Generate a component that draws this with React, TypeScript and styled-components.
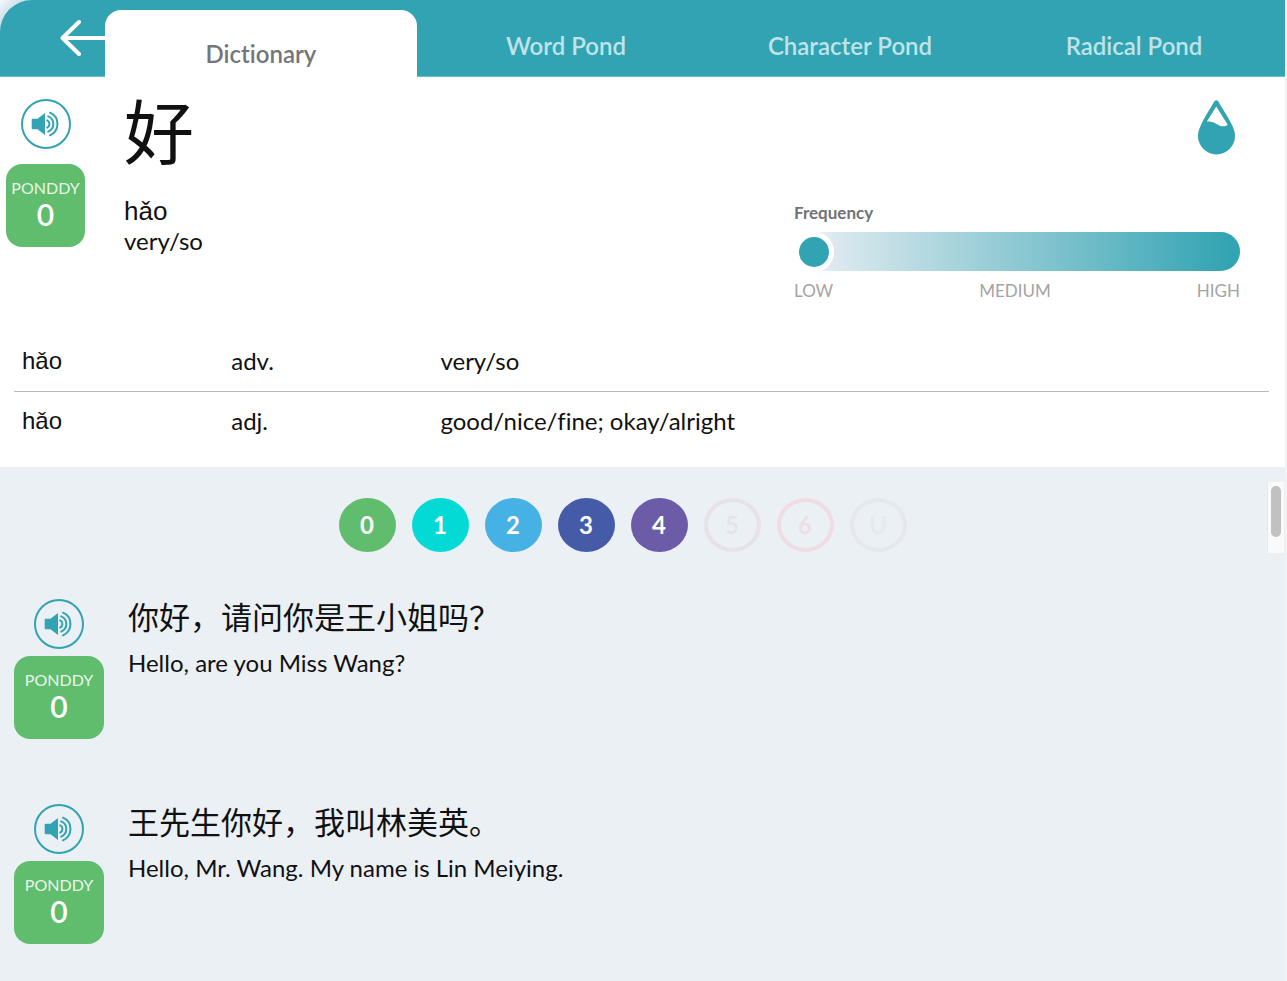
import React from "react";
import styled, { createGlobalStyle } from "styled-components";

const TEAL = "#32a3b2";
const GREEN = "#5fbd6d";
const HAN = '"Noto Sans CJK SC", sans-serif';

const GlobalStyle = createGlobalStyle`
  *, *::before, *::after { box-sizing: border-box; }
  body {
    margin: 0;
    background: #fff;
    color: #111;
    font-family: "Lato", "Open Sans", sans-serif;
    font-size: 24px;
    line-height: 32px;
    font-variant-ligatures: none;
  }
  button { font: inherit; border: 0; padding: 0; background: none; cursor: pointer; }
  h1, p { margin: 0; font-weight: 400; }
`;

const Page = styled.div`
  display: flex;
  flex-direction: column;
  min-height: 100vh;
`;

const HeaderBack = styled.div`
  background: linear-gradient(135deg, #f4f8fb 0, #cfe0ec 16px, #cfe0ec 40px, #fff 41px);
  padding-right: 2px;
`;

const Header = styled.header`
  display: flex;
  height: 77px;
  border-top-left-radius: 32px;
  background: ${TEAL};
  border-bottom: 1px solid #6cbfca;
`;

const BackButton = styled.button`
  flex: none;
  width: 105px;
  height: 76px;
  display: flex;
  justify-content: flex-end;
`;

const Tabs = styled.nav`
  flex: 1;
  display: flex;
  padding-right: 9px;
`;

const Tab = styled.a<{ $active?: boolean }>`
  flex: ${(p) => (p.$active ? "312 1 0" : "284 1 0")};
  display: flex;
  align-items: center;
  justify-content: center;
  height: ${(p) => (p.$active ? "67px" : "77px")};
  margin: ${(p) => (p.$active ? "10px 7px 0 0" : "0")};
  padding-top: ${(p) => (p.$active ? "20px" : "15px")};
  border-radius: ${(p) => (p.$active ? "16px 16px 0 0" : "0")};
  background: ${(p) => (p.$active ? "#fff" : "transparent")};
  color: ${(p) => (p.$active ? "#757679" : "#bfe3e8")};
  font-weight: 600;
  text-decoration: none;
`;

const Main = styled.main`
  flex: 1;
  display: flex;
  flex-direction: column;
  border-right: 2px solid #f3f3f4;
`;

const Entry = styled.section`
  display: flex;
  padding: 22px 45px 0 6px;
  min-height: 254px;
`;

const Side = styled.div<{ $wide?: boolean }>`
  flex: none;
  display: flex;
  flex-direction: column;
  align-items: center;
  width: ${(p) => (p.$wide ? "90px" : "79px")};
  gap: ${(p) => (p.$wide ? "7px" : "15px")};
`;

const RoundButton = styled.button`
  display: block;
  width: 50px;
  height: 50px;
  svg { display: block; }
`;

const Badge = styled.div`
  align-self: stretch;
  height: 83px;
  padding-top: 13px;
  border-radius: 16px;
  background: ${GREEN};
  color: #fff;
  text-align: center;
`;

const BadgeName = styled.div`
  font-size: 16px;
  line-height: 22px;
  color: #eaf7ec;
`;

const BadgeLevel = styled.div`
  font-size: 30px;
  line-height: 30px;
  font-weight: 600;
`;

const Word = styled.div`
  flex: 670 1 0;
  padding-left: 39px;
`;

const Character = styled.h1`
  font-family: ${HAN};
  font-size: 70px;
  line-height: 60px;
  margin-bottom: 36px;
`;

const Pinyin = styled.p`
  font-family: "Liberation Sans", sans-serif;
  font-size: 26px;
`;

const Gloss = styled.p`
  line-height: 28px;
`;

const Aside = styled.div`
  flex: 446 1 0;
  display: flex;
  flex-direction: column;
`;

const DropButton = styled.button`
  align-self: flex-end;
  width: 37px;
  height: 55px;
  margin: 1px 5px 48px 0;
  svg { display: block; }
`;

const FrequencyLabel = styled.label`
  font-size: 17px;
  line-height: 20px;
  font-weight: 700;
  color: #717276;
  margin-bottom: 9px;
`;

const Slider = styled.input`
  appearance: none;
  display: block;
  width: 100%;
  height: 39px;
  margin: 0;
  border-radius: 20px;
  background: linear-gradient(to right, #fff 0, #dce9ef 40px, ${TEAL} 98%);
  &::-webkit-slider-thumb {
    appearance: none;
    width: 40px;
    height: 40px;
    border: 5px solid #fff;
    border-radius: 50%;
    background: ${TEAL};
  }
`;

const Scale = styled.div`
  display: flex;
  justify-content: space-between;
  padding-top: 9px;
  font-size: 17px;
  line-height: 22px;
  color: #a3a4a6;
`;

const Senses = styled.table`
  margin: 0 16px 16px 14px;
  border-collapse: collapse;
  table-layout: fixed;
  td { height: 60px; padding: 0 0 0 8px; }
  tr + tr td { border-top: 1px solid #b9babc; }
`;

const SenseCell = styled.td<{ $w: string; $pinyin?: boolean }>`
  width: ${(p) => p.$w};
  font-family: ${(p) => (p.$pinyin ? '"Liberation Sans", sans-serif' : "inherit")};
`;

const Examples = styled.section`
  position: relative;
  flex: 1;
  padding: 31px 40px 36px 14px;
  background: #ebf0f5;
`;

const Levels = styled.div`
  display: flex;
  justify-content: center;
  gap: 16px;
  padding-right: 14px;
  margin-bottom: 47px;
`;

const Level = styled.button<{ $color: string; $off?: boolean }>`
  width: 57px;
  height: 54px;
  border-radius: 50%;
  border: ${(p) => (p.$off ? `4px solid ${p.$color}` : "0")};
  background: ${(p) => (p.$off ? "transparent" : p.$color)};
  color: ${(p) => (p.$off ? p.$color : "#fff")};
  font-weight: ${(p) => (p.$off ? 600 : 700)};
`;

const ScrollTrack = styled.div`
  position: absolute;
  top: 15px;
  right: 1px;
  width: 17px;
  height: 71px;
  padding: 4px 3px 0 3px;
  background: #fafafa;
  border-left: 1px solid #e6e9ec;
`;

const ScrollThumb = styled.div`
  width: 10px;
  height: 51px;
  border-radius: 5px;
  background: #c1c1c1;
`;

const Example = styled.article`
  display: flex;
  & + & { margin-top: 65px; }
`;

const ExampleText = styled.div`
  padding-left: 24px;
`;

const Sentence = styled.p`
  font-family: ${HAN};
  font-size: 31px;
  line-height: 34px;
  margin-bottom: 14px;
`;

const SpeakerButton = () => (
  <RoundButton aria-label="Play audio">
    <svg width="50" height="50" viewBox="0 0 50 50" fill="none" stroke={TEAL} strokeWidth="2">
      <circle cx="25" cy="25" r="24" />
      <path d="M11.500 19.800h5L24 14v22l-7.500-5.800h-5a.8.8 0 0 1-.8-.8v-8.800a.8.8 0 0 1 .8-.8z" fill={TEAL} stroke="none" />
      <path d="M26.200 21.400a4 4 0 0 1 0 7.200M27.200 17.400a8.200 8.200 0 0 1 0 15.200M29 13.700a12.300 12.300 0 0 1 0 22.600" strokeLinecap="round" />
    </svg>
  </RoundButton>
);

const PonddyBadge = ({ level }: { level: number }) => (
  <Badge>
    <BadgeName>PONDDY</BadgeName>
    <BadgeLevel>{level}</BadgeLevel>
  </Badge>
);

const tabs = ["Dictionary", "Word Pond", "Character Pond", "Radical Pond"];

const senses = [
  { pinyin: "hǎo", part: "adv.", meaning: "very/so" },
  { pinyin: "hǎo", part: "adj.", meaning: "good/nice/fine; okay/alright" },
];

const levels = [
  { name: "0", color: GREEN },
  { name: "1", color: "#03dad6" },
  { name: "2", color: "#45b1e4" },
  { name: "3", color: "#465ba8" },
  { name: "4", color: "#6c5ba6" },
  { name: "5", color: "#e7e2e9", off: true },
  { name: "6", color: "#efdde3", off: true },
  { name: "U", color: "#e5e8ed", off: true },
];

const examples = [
  { zh: "你好，请问你是王小姐吗？", en: "Hello, are you Miss Wang?" },
  { zh: "王先生你好，我叫林美英。", en: "Hello, Mr. Wang. My name is Lin Meiying." },
];

export default function App() {
  return (
    <Page>
      <GlobalStyle />
      <HeaderBack>
        <Header>
          <BackButton aria-label="Back">
            <svg width="45" height="76" viewBox="0 0 45 76" fill="none" stroke="#fff" strokeWidth="4" strokeLinecap="round" strokeLinejoin="round">
              <path d="M48 38H3M19 22L2.500 38L19 54" />
            </svg>
          </BackButton>
          <Tabs>
            {tabs.map((t, i) => (
              <Tab key={t} href="#" $active={i === 0}>{t}</Tab>
            ))}
          </Tabs>
        </Header>
      </HeaderBack>
      <Main>
        <Entry>
          <Side>
            <SpeakerButton />
            <PonddyBadge level={0} />
          </Side>
          <Word>
            <Character lang="zh">好</Character>
            <Pinyin>hǎo</Pinyin>
            <Gloss>very/so</Gloss>
          </Word>
          <Aside>
            <DropButton aria-label="Pond">
              <svg width="37" height="55" viewBox="0 0 37 55">
                <path
                  d="M16.400 1.300Q18.300-.8 20.200 1.300C24 8 31 18.500 34.500 26C36 29.300 37 32.700 37 36A18.500 18.500 0 0 1 0 36C0 32.700 1 29.300 2.500 26C6 18.500 12.500 8 16.400 1.300ZM18.300 6.500L8.700 21.800C15.500 20 19 25.500 24 26.200C26.500 26.500 28.500 26 29.700 24.800Z"
                  fill={TEAL}
                  fillRule="evenodd"
                />
              </svg>
            </DropButton>
            <FrequencyLabel htmlFor="frequency">Frequency</FrequencyLabel>
            <Slider id="frequency" type="range" min={0} max={100} defaultValue={0} />
            <Scale>
              <span>LOW</span>
              <span>MEDIUM</span>
              <span>HIGH</span>
            </Scale>
          </Aside>
        </Entry>
        <Senses>
          <tbody>
            {senses.map((s) => (
              <tr key={s.part}>
                <SenseCell $w="16.67%" $pinyin>{s.pinyin}</SenseCell>
                <SenseCell $w="16.67%">{s.part}</SenseCell>
                <SenseCell $w="auto">{s.meaning}</SenseCell>
              </tr>
            ))}
          </tbody>
        </Senses>
        <Examples>
          <Levels>
            {levels.map((l) => (
              <Level key={l.name} $color={l.color} $off={l.off} aria-pressed={!l.off}>{l.name}</Level>
            ))}
          </Levels>
          <ScrollTrack><ScrollThumb /></ScrollTrack>
          {examples.map((e) => (
            <Example key={e.en}>
              <Side $wide>
                <SpeakerButton />
                <PonddyBadge level={0} />
              </Side>
              <ExampleText>
                <Sentence lang="zh">{e.zh}</Sentence>
                <p>{e.en}</p>
              </ExampleText>
            </Example>
          ))}
        </Examples>
      </Main>
    </Page>
  );
}
